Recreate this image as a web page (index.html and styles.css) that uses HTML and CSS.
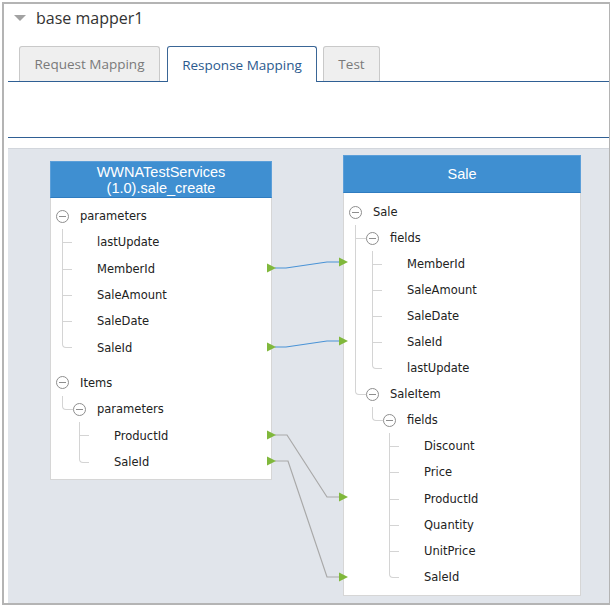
FILE: index.html
```html
<!DOCTYPE html>
<html>
<head>
<meta charset="utf-8">
<link rel="stylesheet" href="styles.css">
</head>
<body>
<div class="frame">
  <div class="title"><span class="caret"></span><span class="title-text">base mapper1</span></div>
  <div class="tabs">
    <div class="tab tab-req">Request Mapping</div>
    <div class="tab tab-resp active">Response Mapping</div>
    <div class="tab tab-test">Test</div>
  </div>
  <div class="toolbar"></div>
  <div class="canvas">
    <div class="node node-left">
      <div class="node-head">WWNATestServices<br>(1.0).sale_create</div>
      <div class="node-body">
        <ul class="tree">
          <li><div class="row"><span class="toggle"></span><span class="label">parameters</span></div>
            <ul>
              <li><div class="row"><span class="slot"></span><span class="label">lastUpdate</span></div></li>
              <li><div class="row"><span class="slot"></span><span class="label">MemberId</span></div></li>
              <li><div class="row"><span class="slot"></span><span class="label">SaleAmount</span></div></li>
              <li><div class="row"><span class="slot"></span><span class="label">SaleDate</span></div></li>
              <li><div class="row"><span class="slot"></span><span class="label">SaleId</span></div></li>
            </ul>
          </li>
          <li><div class="row"><span class="toggle"></span><span class="label">Items</span></div>
            <ul>
              <li class="group"><div class="row"><span class="toggle"></span><span class="label">parameters</span></div>
                <ul>
                  <li><div class="row"><span class="slot"></span><span class="label">ProductId</span></div></li>
                  <li><div class="row"><span class="slot"></span><span class="label">SaleId</span></div></li>
                </ul>
              </li>
            </ul>
          </li>
        </ul>
      </div>
    </div>
    <div class="node node-right">
      <div class="node-head">Sale</div>
      <div class="node-body">
        <ul class="tree tight">
          <li><div class="row"><span class="toggle"></span><span class="label">Sale</span></div>
            <ul>
              <li class="group"><div class="row"><span class="toggle"></span><span class="label">fields</span></div>
                <ul>
                  <li><div class="row"><span class="slot"></span><span class="label">MemberId</span></div></li>
                  <li><div class="row"><span class="slot"></span><span class="label">SaleAmount</span></div></li>
                  <li><div class="row"><span class="slot"></span><span class="label">SaleDate</span></div></li>
                  <li><div class="row"><span class="slot"></span><span class="label">SaleId</span></div></li>
                  <li><div class="row"><span class="slot"></span><span class="label">lastUpdate</span></div></li>
                </ul>
              </li>
              <li class="group"><div class="row"><span class="toggle"></span><span class="label">SaleItem</span></div>
                <ul>
                  <li class="group"><div class="row"><span class="toggle"></span><span class="label">fields</span></div>
                    <ul>
                      <li><div class="row"><span class="slot"></span><span class="label">Discount</span></div></li>
                      <li><div class="row"><span class="slot"></span><span class="label">Price</span></div></li>
                      <li><div class="row"><span class="slot"></span><span class="label">ProductId</span></div></li>
                      <li><div class="row"><span class="slot"></span><span class="label">Quantity</span></div></li>
                      <li><div class="row"><span class="slot"></span><span class="label">UnitPrice</span></div></li>
                      <li><div class="row"><span class="slot"></span><span class="label">SaleId</span></div></li>
                    </ul>
                  </li>
                </ul>
              </li>
            </ul>
          </li>
        </ul>
      </div>
    </div>
    <svg class="links" width="602" height="455" viewBox="0 0 602 455">
      <g transform="translate(-8,-149)">
        <path d="M275 268 L286 268 L327 262 L340 262" class="link-blue"/>
        <path d="M275 347 L286 347 L327 341 L340 341" class="link-blue"/>
        <path d="M275 435 L287 435 L327 497 L340 497" class="link-gray"/>
        <path d="M275 461 L288 461 L327 577 L340 577" class="link-gray"/>
        <polygon points="267,263.5 276,268 267,272.5" class="arrow"/>
        <polygon points="267,342.5 276,347 267,351.5" class="arrow"/>
        <polygon points="267,430.5 276,435 267,439.5" class="arrow"/>
        <polygon points="267,456.5 276,461 267,465.5" class="arrow"/>
        <polygon points="339,257.5 348,262 339,266.5" class="arrow"/>
        <polygon points="339,336.5 348,341 339,345.5" class="arrow"/>
        <polygon points="339,492.5 348,497 339,501.5" class="arrow"/>
        <polygon points="339,572.5 348,577 339,581.5" class="arrow"/>
      </g>
    </svg>
  </div>
</div>
</body>
</html>
```
FILE: styles.css
```css
html, body {
  margin: 0;
  padding: 0;
  background: #ffffff;
}

.frame {
  margin: 2px 0 0 2px;
  width: 608px;
  height: 603px;
  box-sizing: border-box;
  border: 2px solid #b4b4b4;
  border-right-width: 1px;
  padding-left: 4px;
  display: flex;
  flex-direction: column;
  font-family: "Open Sans", "Liberation Sans", sans-serif;
}

.title {
  height: 28px;
  display: flex;
  align-items: center;
}

.caret {
  width: 0;
  height: 0;
  margin-left: 6px;
  border-left: 6.5px solid transparent;
  border-right: 6.5px solid transparent;
  border-top: 6px solid #a2a2a2;
}

.title-text {
  margin-left: 10px;
  font-size: 16px;
  color: #333333;
}

.tabs {
  margin-top: 14px;
  height: 35px;
  display: flex;
  align-items: flex-end;
  padding-left: 11px;
  border-bottom: 1px solid #2f5f94;
}

.tab {
  height: 35px;
  box-sizing: border-box;
  display: flex;
  align-items: center;
  justify-content: center;
  font-size: 13.5px;
  color: #7a7a7a;
  background: #efefef;
  border: 1px solid #c9c9c9;
  border-bottom: none;
  border-radius: 3px 3px 0 0;
}

.tab-req { width: 141px; }
.tab-resp { width: 150px; margin-left: 7px; }
.tab-test { width: 57px; margin-left: 6px; }

.tab.active {
  height: 36px;
  margin-bottom: -1px;
  background: #ffffff;
  color: #2b5a8e;
  border-color: #3a6696;
}

.toolbar {
  height: 55px;
  border-bottom: 1px solid #2f5f94;
}

.canvas {
  margin-top: 10px;
  flex: 1;
  position: relative;
  background: #e1e5eb;
  border-top: 1px solid #d2d6dc;
  overflow: hidden;
}

.node {
  position: absolute;
  display: flex;
  flex-direction: column;
}

.node-left {
  left: 42px;
  top: 12px;
  width: 222px;
  height: 319px;
}

.node-right {
  left: 335px;
  top: 6px;
  width: 238px;
  height: 441px;
}

.node-head {
  background: #3f8fd1;
  border: 1px solid #5c9fd9;
  border-bottom-color: #2f7cc0;
  color: #ffffff;
  font-family: "Liberation Sans", Arial, sans-serif;
  font-size: 14.5px;
  line-height: 16px;
  text-align: center;
  display: flex;
  align-items: center;
  justify-content: center;
  box-sizing: border-box;
}

.node-left .node-head { height: 37px; }
.node-right .node-head { height: 38px; }

.node-body {
  flex: 1;
  background: #ffffff;
  border: 1px solid #d6d6d6;
  border-top: none;
  padding-top: 5px;
}

.node-right .node-body {
  padding-top: 6px;
}

.tree, .tree ul {
  list-style: none;
  margin: 0;
  padding: 0;
}

.tree ul {
  padding-left: 17px;
}

.tree li {
  position: relative;
}

.tree > li + li {
  margin-top: 9px;
}

.tree li li::before {
  content: "";
  position: absolute;
  left: -6px;
  top: 0;
  width: 9px;
  height: 13px;
  border-left: 1px solid #d4d4d4;
  border-bottom: 1px solid #d4d4d4;
}

.tree li li.group::before {
  width: 10px;
}

.tree li li::after {
  content: "";
  position: absolute;
  left: -6px;
  top: 13px;
  bottom: 0;
  border-left: 1px solid #d4d4d4;
}

.tree li li:last-child::after {
  display: none;
}

.tree li li:last-child::before {
  border-bottom-left-radius: 4px;
}

.row {
  height: 26.3px;
  display: flex;
  align-items: center;
}

.tight .row {
  height: 26.05px;
}

.toggle, .slot {
  flex: none;
  width: 13px;
  height: 13px;
  margin-left: 5px;
  margin-right: 11px;
  box-sizing: border-box;
}

.toggle {
  position: relative;
  border: 1px solid #8e8e8e;
  border-radius: 50%;
  background: #ffffff;
}

.toggle::after {
  content: "";
  position: absolute;
  left: 2px;
  right: 2px;
  top: 5px;
  height: 1px;
  background: #8e8e8e;
}

.label {
  font-family: "DejaVu Sans", Verdana, sans-serif;
  font-size: 11.5px;
  color: #222222;
  white-space: nowrap;
}

.links {
  position: absolute;
  left: 0;
  top: 0;
  pointer-events: none;
}

.link-blue {
  fill: none;
  stroke: #4a93d6;
  stroke-width: 1.2;
}

.link-gray {
  fill: none;
  stroke: #a9a9a9;
  stroke-width: 1.2;
}

.arrow {
  fill: #80b83c;
}
```
